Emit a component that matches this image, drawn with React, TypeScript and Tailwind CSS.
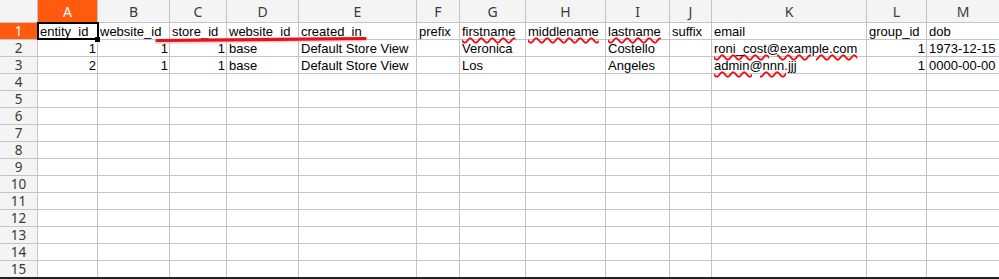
import React from "react";

const cols = [
  { l: "A", w: 60 },
  { l: "B", w: 72 },
  { l: "C", w: 57 },
  { l: "D", w: 72 },
  { l: "E", w: 118 },
  { l: "F", w: 43 },
  { l: "G", w: 66 },
  { l: "H", w: 80 },
  { l: "I", w: 64 },
  { l: "J", w: 42 },
  { l: "K", w: 155 },
  { l: "L", w: 60 },
  { l: "M", w: 0 },
];

type Cell = { t: string; r?: boolean; s?: boolean };

const data: Cell[][] = [
  [
    { t: "entity_id" },
    { t: "website_id" },
    { t: "store_id" },
    { t: "website_id" },
    { t: "created_in" },
    { t: "prefix" },
    { t: "firstname", s: true },
    { t: "middlename", s: true },
    { t: "lastname", s: true },
    { t: "suffix" },
    { t: "email" },
    { t: "group_id" },
    { t: "dob" },
  ],
  [
    { t: "1", r: true },
    { t: "1", r: true },
    { t: "1", r: true },
    { t: "base" },
    { t: "Default Store View" },
    { t: "" },
    { t: "Veronica" },
    { t: "" },
    { t: "Costello" },
    { t: "" },
    { t: "roni_cost@example.com", s: true },
    { t: "1", r: true },
    { t: "1973-12-15" },
  ],
  [
    { t: "2", r: true },
    { t: "1", r: true },
    { t: "1", r: true },
    { t: "base" },
    { t: "Default Store View" },
    { t: "" },
    { t: "Los" },
    { t: "" },
    { t: "Angeles" },
    { t: "" },
    { t: "admin@nnn.jjj", s: true },
    { t: "1", r: true },
    { t: "0000-00-00" },
  ],
];

const hdrFont = { fontFamily: '"Noto Sans", "Open Sans", sans-serif' };
const cellFont = { fontFamily: '"Liberation Sans", Arial, sans-serif' };

export default function App() {
  const rows = Array.from({ length: 15 }, (_, i) => i + 1);
  return (
    <div className="relative w-[999px] h-[279px] overflow-hidden bg-white">
      {/* header row */}
      <div className="flex h-[23px] border-b border-[#c4c4c4] bg-[#f4f4f4]" style={hdrFont}>
        <div className="w-[38px] shrink-0 border-r border-[#c4c4c4]" />
        {cols.map((c, i) => (
          <div
            key={c.l}
            className={`${c.w ? "shrink-0 border-r" : "flex-1"} border-[#c4c4c4] flex items-center justify-center text-[14px] leading-[16px] pt-[2px] ${
              i === 0 ? "bg-[#ff5a0d] text-white" : "text-[#3a3a3a]"
            }`}
            style={c.w ? { width: c.w } : undefined}
          >
            {c.l}
          </div>
        ))}
      </div>
      {rows.map((r) => {
        const rd = data[r - 1];
        return (
          <div
            key={r}
            className={`flex h-[17px] border-b ${r === 15 ? "border-[#222]" : "border-[#c4c4c4]"}`}
          >
            <div
              className={`w-[38px] shrink-0 border-r border-[#c4c4c4] flex items-center justify-center text-[13.5px] leading-[15px] overflow-hidden ${
                r === 1 ? "bg-[#ff5a0d] text-white" : "bg-[#f4f4f4] text-[#3a3a3a]"
              }`}
              style={hdrFont}
            >
              {r}
            </div>
            {cols.map((c, i) => {
              const cell = rd ? rd[i] : undefined;
              return (
                <div
                  key={c.l}
                  className={`${c.w ? "shrink-0 border-r" : "flex-1"} border-[#c4c4c4] flex items-end whitespace-nowrap overflow-visible text-[13px] leading-[15px] text-black px-[1px] ${
                    cell?.r ? "justify-end" : "justify-start pl-[2px]"
                  }`}
                  style={c.w ? { width: c.w, ...cellFont } : cellFont}
                >
                  {cell && cell.t ? (
                    <span
                      className={
                        cell.s
                          ? "underline decoration-wavy decoration-[#e8141b] decoration-[1.5px] underline-offset-[1px]"
                          : ""
                      }
                    >
                      {cell.t}
                    </span>
                  ) : null}
                </div>
              );
            })}
          </div>
        );
      })}
      <div className="h-[1px] bg-[#222]" />

      {/* selection box on A1 */}
      <div className="absolute left-[37px] top-[22px] w-[62px] h-[18px] border-2 border-black pointer-events-none" />
      <div className="absolute left-[95px] top-[37px] w-[5px] h-[5px] bg-black" />

      {/* red annotation stroke */}
      <svg
        className="absolute left-0 top-0 pointer-events-none"
        width="999"
        height="279"
        viewBox="0 0 999 279"
      >
        <line x1="157" y1="41.5" x2="365" y2="39" stroke="#f4a0a0" strokeWidth="5" strokeLinecap="round" opacity="0.5" />
        <line x1="157" y1="40.5" x2="365" y2="38.5" stroke="#e3121b" strokeWidth="3.2" strokeLinecap="round" />
      </svg>
    </div>
  );
}
